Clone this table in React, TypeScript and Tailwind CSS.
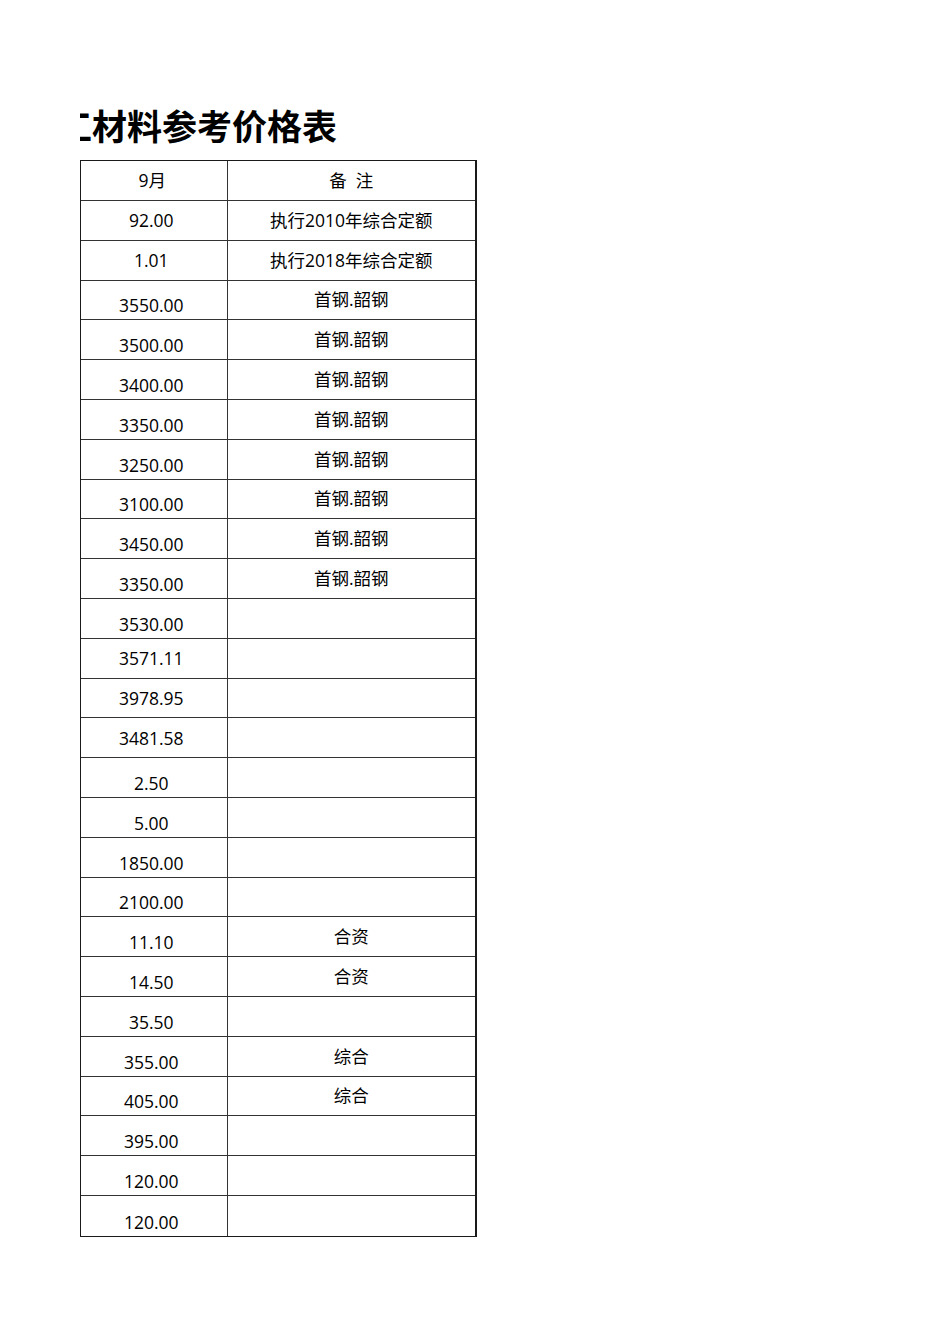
const rows: { v: string; n: string; mid?: boolean }[] = [
  { v: "92.00", n: "执行2010年综合定额", mid: true },
  { v: "1.01", n: "执行2018年综合定额", mid: true },
  { v: "3550.00", n: "首钢.韶钢" },
  { v: "3500.00", n: "首钢.韶钢" },
  { v: "3400.00", n: "首钢.韶钢" },
  { v: "3350.00", n: "首钢.韶钢" },
  { v: "3250.00", n: "首钢.韶钢" },
  { v: "3100.00", n: "首钢.韶钢" },
  { v: "3450.00", n: "首钢.韶钢" },
  { v: "3350.00", n: "首钢.韶钢" },
  { v: "3530.00", n: "" },
  { v: "3571.11", n: "", mid: true },
  { v: "3978.95", n: "", mid: true },
  { v: "3481.58", n: "", mid: true },
  { v: "2.50", n: "" },
  { v: "5.00", n: "" },
  { v: "1850.00", n: "" },
  { v: "2100.00", n: "" },
  { v: "11.10", n: "合资" },
  { v: "14.50", n: "合资" },
  { v: "35.50", n: "" },
  { v: "355.00", n: "综合" },
  { v: "405.00", n: "综合" },
  { v: "395.00", n: "" },
  { v: "120.00", n: "" },
  { v: "120.00", n: "" },
];

const font = { fontFamily: '"Open Sans", "Noto Sans CJK SC", sans-serif' };
const titleFont = { fontFamily: '"Noto Sans CJK SC", sans-serif' };

export default function App() {
  return (
    <div className="min-h-screen bg-white text-black pt-[100px] pl-[80px]" style={font}>
      <div className="w-[300px] h-[50px] overflow-hidden">
        <div className="ml-[-23px] whitespace-nowrap text-[35px] font-bold leading-[50px]" style={titleFont}>
          工材料参考价格表
        </div>
      </div>
      <div className="mt-[10px] w-[397px] border-[1.5px] border-[#1a1a1a] border-r-2">
        <div className="flex h-[40px] border-b border-[#333] text-[17.5px]">
          <div className="w-[146.5px] flex items-center justify-center pr-[3px] border-r border-[#333]">9月</div>
          <div className="flex-1 flex items-center justify-center">备&nbsp;&nbsp;注</div>
        </div>
        {rows.map((r, i) => (
          <div
            key={i}
            className={
              "flex h-[39.8px] text-[17.5px] " +
              (i < rows.length - 1 ? "border-b border-[#333]" : "")
            }
          >
            <div
              className={
                "w-[146.5px] flex justify-center pr-[5px] border-r border-[#333] " +
                (r.mid ? "items-center" : "items-end pb-[2px]")
              }
            >
              <span className="leading-[24px]">{r.v}</span>
            </div>
            <div className="flex-1 flex items-center justify-center pb-[1px]">
              <span className="leading-[24px]">{r.n}</span>
            </div>
          </div>
        ))}
      </div>
    </div>
  );
}
